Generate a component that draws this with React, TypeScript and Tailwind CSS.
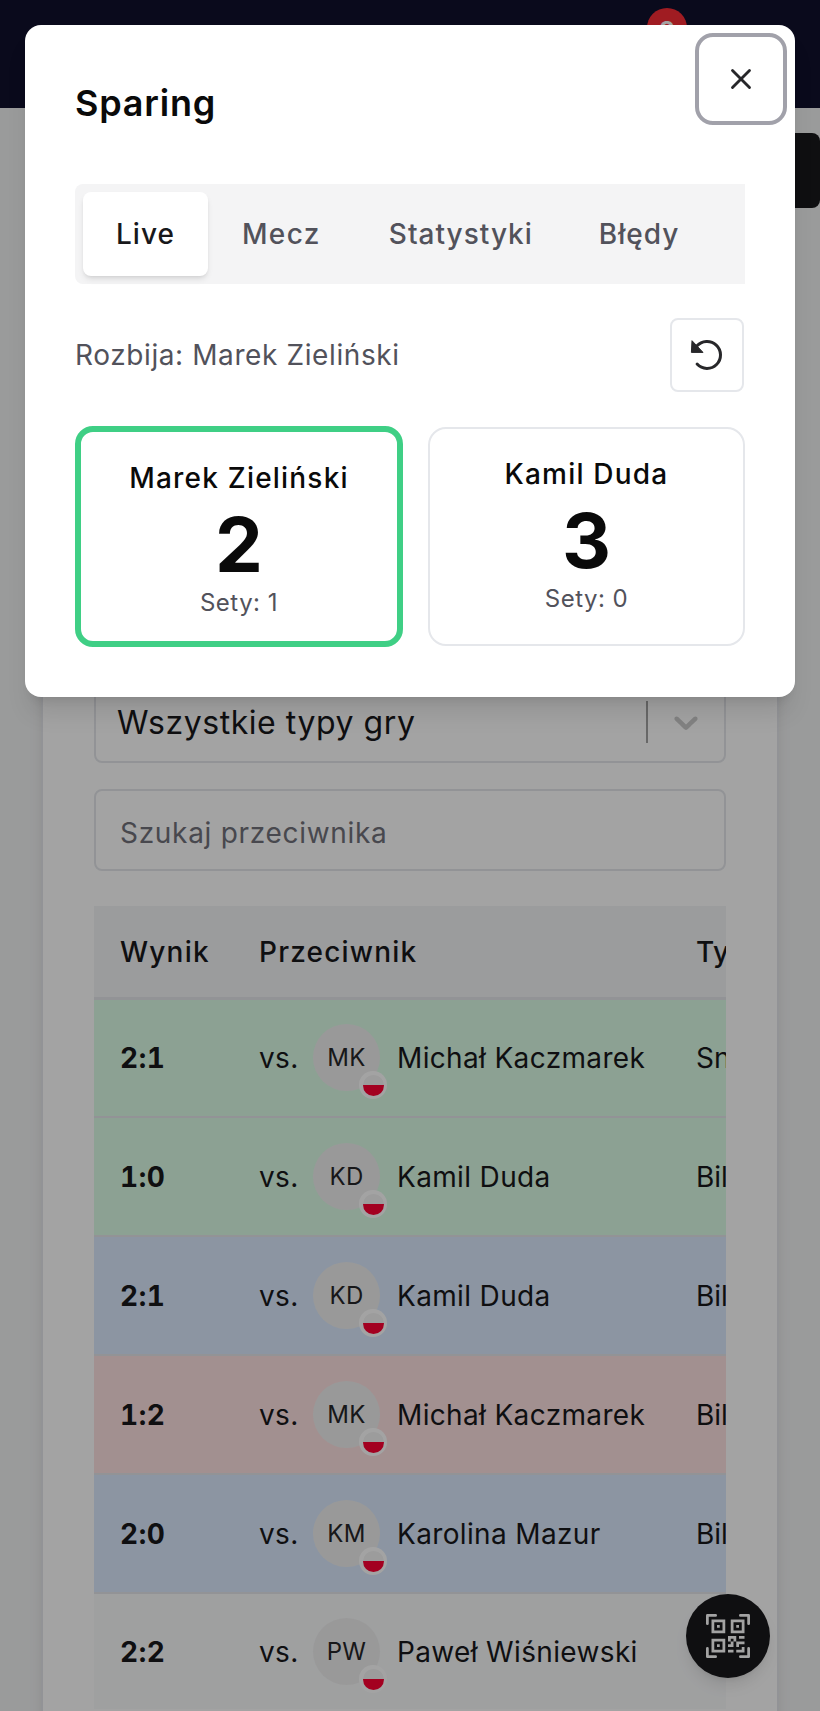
import { X } from "lucide-react";
import { BsQrCodeScan } from "react-icons/bs";

const matches = [
  { score: "2:1", name: "Michał Kaczmarek", initials: "MK", type: "Snooker", color: "bg-[#dcfce7]" },
  { score: "1:0", name: "Kamil Duda", initials: "KD", type: "Bilard", color: "bg-[#dcfce7]" },
  { score: "2:1", name: "Kamil Duda", initials: "KD", type: "Bilard", color: "bg-[#dbeafe]" },
  { score: "1:2", name: "Michał Kaczmarek", initials: "MK", type: "Bilard", color: "bg-[#fee2e2]" },
  { score: "2:0", name: "Karolina Mazur", initials: "KM", type: "Bilard", color: "bg-[#dbeafe]" },
  { score: "2:2", name: "Paweł Wiśniewski", initials: "PW", type: "Bilard", color: "bg-[#f9fafb]" },
];

function Avatar({ initials }: { initials: string }) {
  return (
    <div className="relative w-[67px] h-[67px] shrink-0 rounded-full bg-[#f0f0f0] flex items-center justify-center text-[24px] text-[#27272a]">
      {initials}
      <div className="absolute left-[46px] top-[47px] w-[28px] h-[28px] rounded-full bg-white flex items-center justify-center">
        <div className="w-[21px] h-[21px] rounded-full overflow-hidden bg-[#f4f4f4]">
          <div className="h-[10px]" />
          <div className="h-[11px] bg-[#ff0033]" />
        </div>
      </div>
    </div>
  );
}

function Background() {
  return (
    <div className="bg-[#f1f2f3]">
      <div className="relative h-[108px] bg-[#11102d]">
        <div className="absolute left-[647px] top-[8px] w-[40px] h-[40px] rounded-full bg-[#fb2c36] text-white text-[24px] font-bold text-center leading-[46px]">
          2
        </div>
      </div>
      <div className="flex justify-end pt-[25px]">
        <div className="w-[200px] h-[75px] rounded-lg bg-[#18181b]" />
      </div>
      <div className="mt-[22px] mx-[41px] bg-white border-2 border-[#e5e7eb] shadow-lg px-[51px] pt-[449px]">
        <div className="h-[82px] border-2 border-[#e5e7eb] rounded-lg flex items-center pl-[21px] text-[32px] text-[#18181b] tracking-[0.55px]">
          <span className="flex-1 pt-[2px]">Wszystkie typy gry</span>
          <div className="w-[2px] h-[42px] bg-[#a3a3a3] mt-[-1px]" />
          <div className="w-[76px] flex justify-center">
            <svg viewBox="0 0 20 20" className="w-[40px] h-[40px] fill-[#cccccc]">
              <path d="M4.516 7.548c0.436-0.446 1.043-0.481 1.576 0l3.908 3.747 3.908-3.747c0.533-0.481 1.141-0.446 1.574 0 0.436 0.445 0.408 1.197 0 1.615-0.406 0.418-4.695 4.502-4.695 4.502-0.217 0.223-0.502 0.335-0.787 0.335s-0.57-0.112-0.789-0.335c0 0-4.287-4.084-4.695-4.502s-0.436-1.17 0-1.615z" />
            </svg>
          </div>
        </div>
        <div className="mt-[26px] h-[82px] border-2 border-[#e5e7eb] rounded-lg flex items-center pl-[24px] pt-[5px] text-[28px] text-[#71717a] tracking-[0.7px]">
          Szukaj przeciwnika
        </div>
        <div className="mt-[35px] overflow-hidden w-[632px] -mr-[2px]">
          <table className="w-[900px] table-fixed border-collapse text-[28px] text-[#18181b] tracking-[0.35px]">
            <thead>
              <tr className="h-[92px] bg-[#f3f4f6] border-b-[3px] border-[#e5e7eb]">
                <th className="w-[139px] pl-[26px] pt-[2px] text-left font-medium tracking-[1.2px]">Wynik</th>
                <th className="w-[437px] pl-[26px] pt-[2px] text-left font-medium tracking-[1.2px]">Przeciwnik</th>
                <th className="pl-[26px] pt-[2px] text-left font-medium">Typ gry</th>
              </tr>
            </thead>
            <tbody>
              {matches.map((m, index) => (
                <tr key={index} className={`h-[119px] border-b-2 border-[#e5e7eb] last:border-b-[6px] last:border-white ${m.color}`}>
                  <td className="pl-[26px] font-bold tabular-nums tracking-[0.6px]">{m.score}</td>
                  <td className="pl-[26px]">
                    <div className="flex items-center">
                      <span className="w-[50px] shrink-0">vs.</span>
                      <span className="ml-[4px]">
                        <Avatar initials={m.initials} />
                      </span>
                      <span className="ml-[17px] whitespace-nowrap">{m.name}</span>
                    </div>
                  </td>
                  <td className="pl-[26px] tracking-normal">{m.type}</td>
                </tr>
              ))}
            </tbody>
          </table>
        </div>
      </div>
    </div>
  );
}

function PlayerCard({ name, points, sets, active }: { name: string; points: number; sets: number; active?: boolean }) {
  return (
    <div
      className={
        active
          ? "h-[221px] rounded-[18px] border-[6px] border-[#3fcf85] pt-[26px] flex flex-col items-center"
          : "h-[219px] rounded-[18px] border-2 border-[#e5e7eb] pt-[25px] flex flex-col items-center"
      }
    >
      <div className="h-[40px] leading-[40px] text-[28px] font-medium text-[#0a0a0a] tracking-[1.2px]">{name}</div>
      <div className="h-[88px] leading-[88px] mt-[2px] text-[76px] font-bold text-[#0a0a0a]">{points}</div>
      <div className="h-[32px] leading-[32px] -mt-px text-[24px] text-[#52525b] tracking-[0.5px]">Sety: {sets}</div>
    </div>
  );
}

function Modal() {
  return (
    <div className="absolute left-[25px] top-[25px] w-[770px] h-[672px] rounded-[16px] bg-white shadow-xl px-[50px] pt-[56px]">
      <button className="absolute left-[670px] top-[8px] w-[92px] h-[92px] rounded-[18px] border-4 border-[#a1a1aa] flex items-center justify-center text-[#27272a]">
        <X size={34} />
      </button>
      <h2 className="h-[44px] leading-[44px] text-[36px] font-semibold text-[#0a0a0a] tracking-[0.8px]">Sparing</h2>
      <div className="mt-[59px] h-[100px] bg-[#f4f4f5] rounded-l-lg flex items-center pl-[8px] text-[28px] font-medium text-[#52525b] tracking-[1px]">
        <div className="h-[84px] px-[33px] flex items-center rounded-lg bg-white text-[#18181b] shadow-md">Live</div>
        <div className="h-[84px] px-[34px] tracking-[1.4px] flex items-center">Mecz</div>
        <div className="h-[84px] pl-[34px] pr-[32px] flex items-center">Statystyki</div>
        <div className="h-[84px] px-[34px] flex items-center">Błędy</div>
      </div>
      <div className="mt-[34px] h-[73px] flex items-center justify-between">
        <span className="text-[28px] text-[#52525b] tracking-[0.6px]">Rozbija: Marek Zieliński</span>
        <button className="w-[74px] h-[74px] mr-px rounded-lg border-2 border-[#e5e7eb] flex items-center justify-center">
          <svg viewBox="0 0 36 36" className="w-[36px] h-[36px]">
            <path d="M7.8 9.1A13.5 13.5 0 1 1 8.1 27.1" fill="none" stroke="#27272a" strokeWidth="3" strokeLinecap="round" />
            <path d="M3 3.7L2.4 15.4H14Z" fill="#27272a" stroke="#27272a" strokeWidth="1" strokeLinejoin="round" />
          </svg>
        </button>
      </div>
      <div className="mt-[35px] grid grid-cols-[328px_317px] gap-[25px] items-center">
        <PlayerCard name="Marek Zieliński" points={2} sets={1} active />
        <PlayerCard name="Kamil Duda" points={3} sets={0} />
      </div>
    </div>
  );
}

export default function App() {
  return (
    <div className="relative h-[1711px] overflow-hidden font-['Inter',sans-serif]">
      <Background />
      <div className="absolute right-[50px] bottom-[33px] w-[84px] h-[84px] rounded-full bg-[#18181b] shadow-lg flex items-center justify-center text-white">
        <BsQrCodeScan size={44} />
      </div>
      <div className="absolute inset-0 bg-black/36" />
      <Modal />
    </div>
  );
}
